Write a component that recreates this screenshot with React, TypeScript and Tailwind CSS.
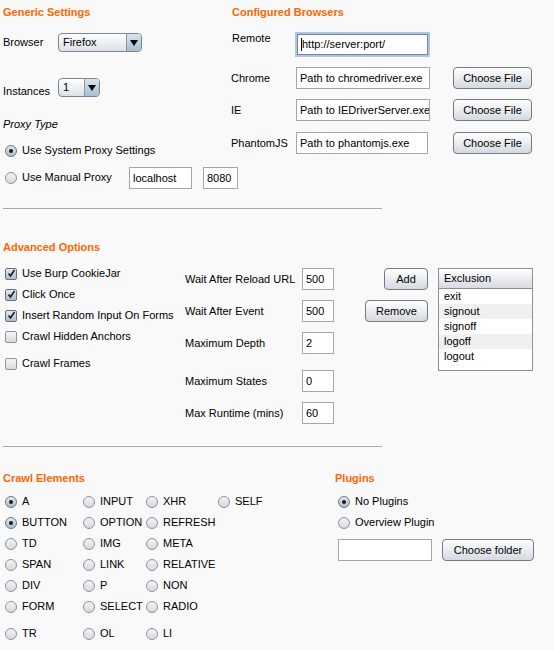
import React from 'react';

const btn =
  'rounded-[4px] border border-[#737b86] bg-linear-to-b from-white to-[#d5d9e0] flex items-center justify-center text-[11px] text-black shrink-0';
const field =
  'h-[22px] border border-[#a6a6a6] bg-white pl-[3px] text-[11px] text-black outline-none shrink-0';

function Radio({ on }: { on?: boolean }) {
  return (
    <span
      className={`w-[12px] h-[12px] rounded-full border shrink-0 flex items-center justify-center ${
        on
          ? 'border-[#6d7683] bg-linear-to-b from-[#e2e8ef] to-[#aebccb]'
          : 'border-[#8d949e] bg-linear-to-b from-[#f3f3f3] to-[#d6dadf]'
      }`}
    >
      {on && <span className="w-[4px] h-[4px] rounded-full bg-[#1c1c1c]" />}
    </span>
  );
}

function Check({ on }: { on?: boolean }) {
  return (
    <span
      className={`w-[12px] h-[12px] rounded-[2px] border shrink-0 flex items-center justify-center ${
        on
          ? 'border-[#67727f] bg-linear-to-b from-[#e1e8f0] to-[#aebdcd]'
          : 'border-[#8d949e] bg-linear-to-b from-[#f5f5f5] to-[#d6dadf]'
      }`}
    >
      {on && (
        <svg width="9" height="9" viewBox="0 0 9 9">
          <path d="M1.5 4.5 L3.5 7 L7.5 1" fill="none" stroke="#1a1a1a" strokeWidth="1.6" />
        </svg>
      )}
    </span>
  );
}

function Combo({ value, w }: { value: string; w: string }) {
  return (
    <div
      className={`${w} h-[19px] rounded-[4px] border border-[#7b8694] bg-linear-to-b from-white to-[#dde1e6] flex overflow-hidden shrink-0`}
    >
      <span className="flex-1 pl-[4px] leading-[17px]">{value}</span>
      <span className="w-[15px] border-l border-[#8997a7] bg-linear-to-b from-[#dae4ef] to-[#a9bcd0] flex items-center justify-center">
        <span className="w-0 h-0 border-l-[4px] border-r-[4px] border-t-[6px] border-l-transparent border-r-transparent border-t-black" />
      </span>
    </div>
  );
}

function Header({ children }: { children: React.ReactNode }) {
  return <div className="font-bold text-[#ff6600] leading-[13px]">{children}</div>;
}

const crawl: [string, boolean][][] = [
  [['A', true], ['INPUT', false], ['XHR', false], ['SELF', false]],
  [['BUTTON', true], ['OPTION', false], ['REFRESH', false]],
  [['TD', false], ['IMG', false], ['META', false]],
  [['SPAN', false], ['LINK', false], ['RELATIVE', false]],
  [['DIV', false], ['P', false], ['NON', false]],
  [['FORM', false], ['SELECT', false], ['RADIO', false]],
  [['TR', false], ['OL', false], ['LI', false]],
];

const exclusions = ['exit', 'signout', 'signoff', 'logoff', 'logout'];

export default function App() {
  return (
    <div className="w-[554px] h-[650px] bg-[#f9f9f9] text-[11px] text-black font-['Liberation_Sans',Arial,sans-serif] leading-[13px]">
      {/* generic + browsers */}
      <div className="flex items-start">
        <div className="w-[231px] pl-[3px] shrink-0">
          <div className="mt-[6px]">
            <Header>Generic Settings</Header>
          </div>
          <div className="mt-[14px] flex items-center">
            <span className="w-[55px] shrink-0">Browser</span>
            <Combo value="Firefox" w="w-[84px]" />
          </div>
          <div className="mt-[25px] flex items-center">
            <span className="w-[55px] pt-[8px] shrink-0">Instances</span>
            <Combo value="1" w="w-[42px]" />
          </div>
          <div className="mt-[20px] italic">Proxy Type</div>
          <div className="mt-[13px] flex items-center gap-[5px] pl-[2px]">
            <Radio on />
            <span>Use System Proxy Settings</span>
          </div>
          <div className="mt-[10px] flex items-center h-[21px]">
            <div className="w-[126px] flex items-center gap-[5px] pl-[2px] shrink-0">
              <Radio />
              <span>Use Manual Proxy</span>
            </div>
            <input readOnly value="localhost" className={`${field} w-[63px] h-[21px]`} />
            <input readOnly value="8080" className={`${field} w-[35px] h-[21px] ml-[11px]`} />
          </div>
        </div>

        <div className="flex-1">
          <div className="mt-[6px] pl-[1px]">
            <Header>Configured Browsers</Header>
          </div>
          <div className="mt-[13px] flex items-start">
            <span className="w-[64px] pl-[1px] shrink-0">Remote</span>
            <div className="w-[135px] h-[25px] border-2 border-[#abc5ea] shadow-[inset_0_0_0_1px_#7a8593] bg-white flex items-center pl-[4px] shrink-0">
              <span className="w-px h-[13px] bg-black" />
              <span>http://server:port/</span>
            </div>
          </div>
          <div className="mt-[10px] flex items-center">
            <span className="w-[65px] shrink-0">Chrome</span>
            <input readOnly value="Path to chromedriver.exe" className={`${field} w-[134px]`} />
            <div className={`${btn} w-[79px] h-[22px] ml-[23px]`}>Choose File</div>
          </div>
          <div className="mt-[10px] flex items-center">
            <span className="w-[65px] shrink-0">IE</span>
            <input readOnly value="Path to IEDriverServer.exe" className={`${field} w-[134px]`} />
            <div className={`${btn} w-[79px] h-[22px] ml-[23px]`}>Choose File</div>
          </div>
          <div className="mt-[11px] flex items-center">
            <span className="w-[65px] shrink-0">PhantomJS</span>
            <input readOnly value="Path to phantomjs.exe" className={`${field} w-[132px]`} />
            <div className={`${btn} w-[79px] h-[22px] ml-[25px]`}>Choose File</div>
          </div>
        </div>
      </div>

      <div className="mt-[20px] ml-[3px] w-[379px] h-px bg-[#a9a9b5]" />

      {/* advanced options */}
      <div className="mt-[32px] ml-[3px]">
        <Header>Advanced Options</Header>
      </div>
      <div className="mt-[9px] flex items-start">
        <div className="w-[184px] pl-[5px] shrink-0">
          {[
            ['Use Burp CookieJar', true],
            ['Click Once', true],
            ['Insert Random Input On Forms', true],
            ['Crawl Hidden Anchors', false],
          ].map(([label, on]) => (
            <div key={label as string} className="h-[21px] flex items-center gap-[5px]">
              <Check on={on as boolean} />
              <span>{label}</span>
            </div>
          ))}
          <div className="mt-[6px] h-[21px] flex items-center gap-[5px]">
            <Check />
            <span>Crawl Frames</span>
          </div>
        </div>

        <div className="mt-[5px] w-[150px] shrink-0">
          {[
            ['Wait After Reload URL', '500', ''],
            ['Wait After Event', '500', 'mt-[10px]'],
            ['Maximum Depth', '2', 'mt-[10px]'],
            ['Maximum States', '0', 'mt-[16px]'],
            ['Max Runtime (mins)', '60', 'mt-[10px]'],
          ].map(([label, v, m]) => (
            <div key={label} className={`${m} flex items-center h-[22px]`}>
              <span className="w-[118px] pl-[1px] shrink-0">{label}</span>
              <input readOnly value={v} className={`${field} w-[32px]`} />
            </div>
          ))}
        </div>

        <div className="mt-[5px] w-[94px] flex flex-col items-end shrink-0">
          <div className={`${btn} w-[44px] h-[22px]`}>Add</div>
          <div className={`${btn} w-[63px] h-[22px] mt-[10px]`}>Remove</div>
        </div>

        <div className="mt-[5px] ml-[10px] w-[95px] h-[103px] border border-[#8d919c] bg-white shrink-0">
          <div className="h-[20px] pl-[5px] flex items-center border-b border-[#8a8e98] bg-linear-to-b from-white to-[#d7dae1]">
            Exclusion
          </div>
          {exclusions.map((e, i) => (
            <div
              key={e}
              className={`h-[15px] leading-[15px] pl-[5px] ${i % 2 ? 'bg-[#f0f0f0]' : 'bg-white'}`}
            >
              {e}
            </div>
          ))}
        </div>
      </div>

      <div className="mt-[22px] ml-[3px] w-[379px] h-px bg-[#a9a9b5]" />

      {/* crawl elements + plugins */}
      <div className="mt-[25px] flex items-start">
        <div className="w-[335px] pl-[3px] shrink-0">
          <Header>Crawl Elements</Header>
          <div className="mt-[6px]">
            {crawl.map((row, r) => (
              <div
                key={r}
                className={`grid grid-cols-[78px_63px_72px_80px] h-[21px] items-center ${
                  r === 6 ? 'mt-[6px]' : ''
                }`}
              >
                {row.map(([label, on]) => (
                  <div key={label} className="flex items-center gap-[5px] pl-[2px]">
                    <Radio on={on} />
                    <span>{label}</span>
                  </div>
                ))}
              </div>
            ))}
          </div>
        </div>

        <div className="flex-1">
          <Header>Plugins</Header>
          <div className="mt-[6px]">
            <div className="h-[21px] flex items-center gap-[5px] pl-[3px]">
              <Radio on />
              <span>No Plugins</span>
            </div>
            <div className="h-[21px] flex items-center gap-[5px] pl-[3px]">
              <Radio />
              <span>Overview Plugin</span>
            </div>
          </div>
          <div className="mt-[6px] flex items-center pl-[3px]">
            <input readOnly value="" className={`${field} w-[94px] h-[21px]`} />
            <div className={`${btn} w-[92px] h-[22px] ml-[10px]`}>Choose folder</div>
          </div>
        </div>
      </div>
    </div>
  );
}
